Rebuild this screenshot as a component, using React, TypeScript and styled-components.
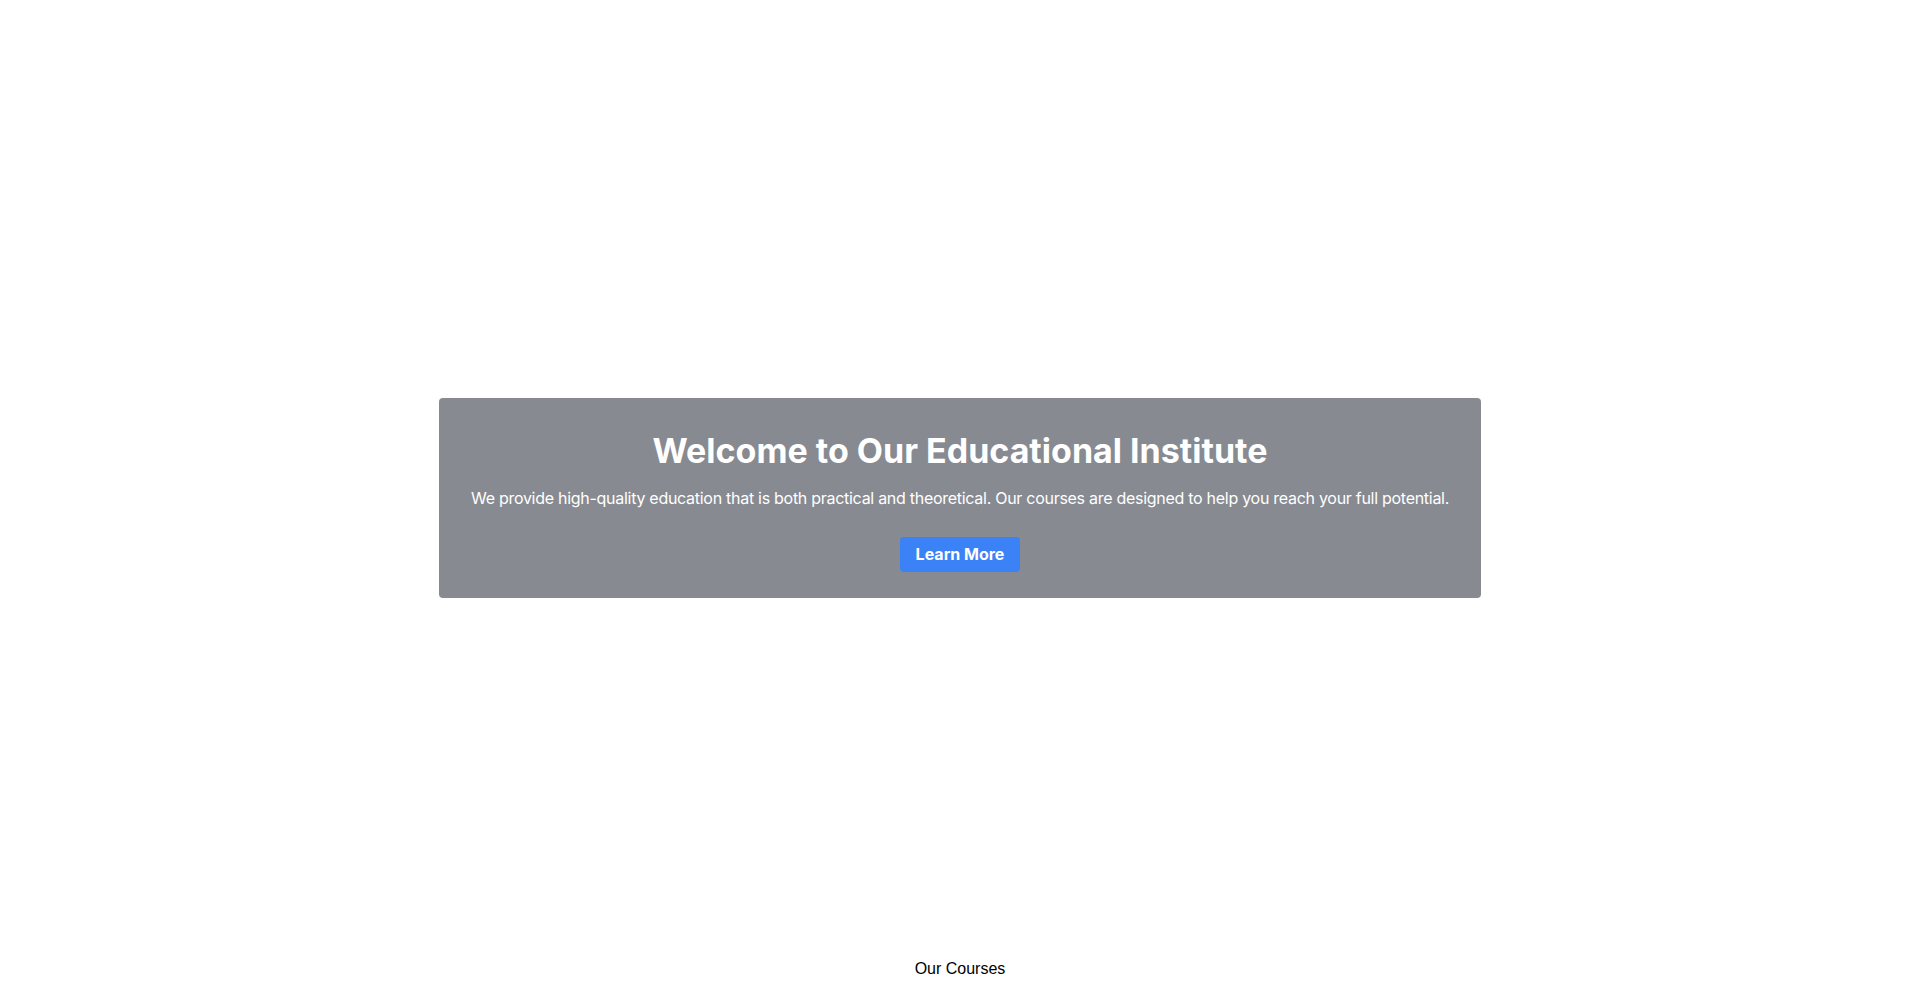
import React from "react";
import styled, { createGlobalStyle } from "styled-components";

const GlobalStyle = createGlobalStyle`
  *, *::before, *::after { box-sizing: border-box; }
  html, body { margin: 0; padding: 0; background: #ffffff; }
  body { font-family: Inter, "Noto Sans", sans-serif; color: #000; }
`;

const Page = styled.main`
  display: flex;
  flex-direction: column;
  align-items: stretch;
`;

const Hero = styled.section`
  height: 960px;
  padding-top: 36px;
  display: flex;
  align-items: center;
  justify-content: center;
`;

const Card = styled.div`
  background: #878a91;
  border-radius: 4px;
  padding: 32px 32px 26px;
  display: flex;
  flex-direction: column;
  align-items: center;
  color: #ffffff;
  text-align: center;
`;

const Title = styled.h1`
  margin: 0 0 15px;
  font-family: Inter, "Noto Sans", sans-serif;
  font-size: 34px;
  font-weight: 700;
  line-height: normal;
  letter-spacing: 0;
`;

const Lead = styled.p`
  margin: 0 0 27px;
  font-size: 16px;
  line-height: 24px;
  font-weight: 400;
  letter-spacing: -0.28px;
`;

const Button = styled.button`
  background: #3b82f6;
  color: #ffffff;
  border: none;
  border-radius: 4px;
  padding: 8px 16px;
  font-family: Inter, "Noto Sans", sans-serif;
  font-size: 16px;
  font-weight: 700;
  line-height: 19px;
  cursor: pointer;
`;

const Courses = styled.section`
  display: flex;
  justify-content: center;
`;

const CoursesHeading = styled.h2`
  margin: 0;
  font-family: "Liberation Sans", Arial, sans-serif;
  font-size: 16px;
  font-weight: 400;
  line-height: normal;
  color: #000000;
`;

export default function App() {
  return (
    <>
      <GlobalStyle />
      <Page>
        <Hero>
          <Card>
            <Title>Welcome to Our Educational Institute</Title>
            <Lead>
              We provide high-quality education that is both practical and theoretical. Our courses are designed to help you reach your full potential.
            </Lead>
            <Button>Learn More</Button>
          </Card>
        </Hero>
        <Courses>
          <CoursesHeading>Our Courses</CoursesHeading>
        </Courses>
      </Page>
    </>
  );
}
